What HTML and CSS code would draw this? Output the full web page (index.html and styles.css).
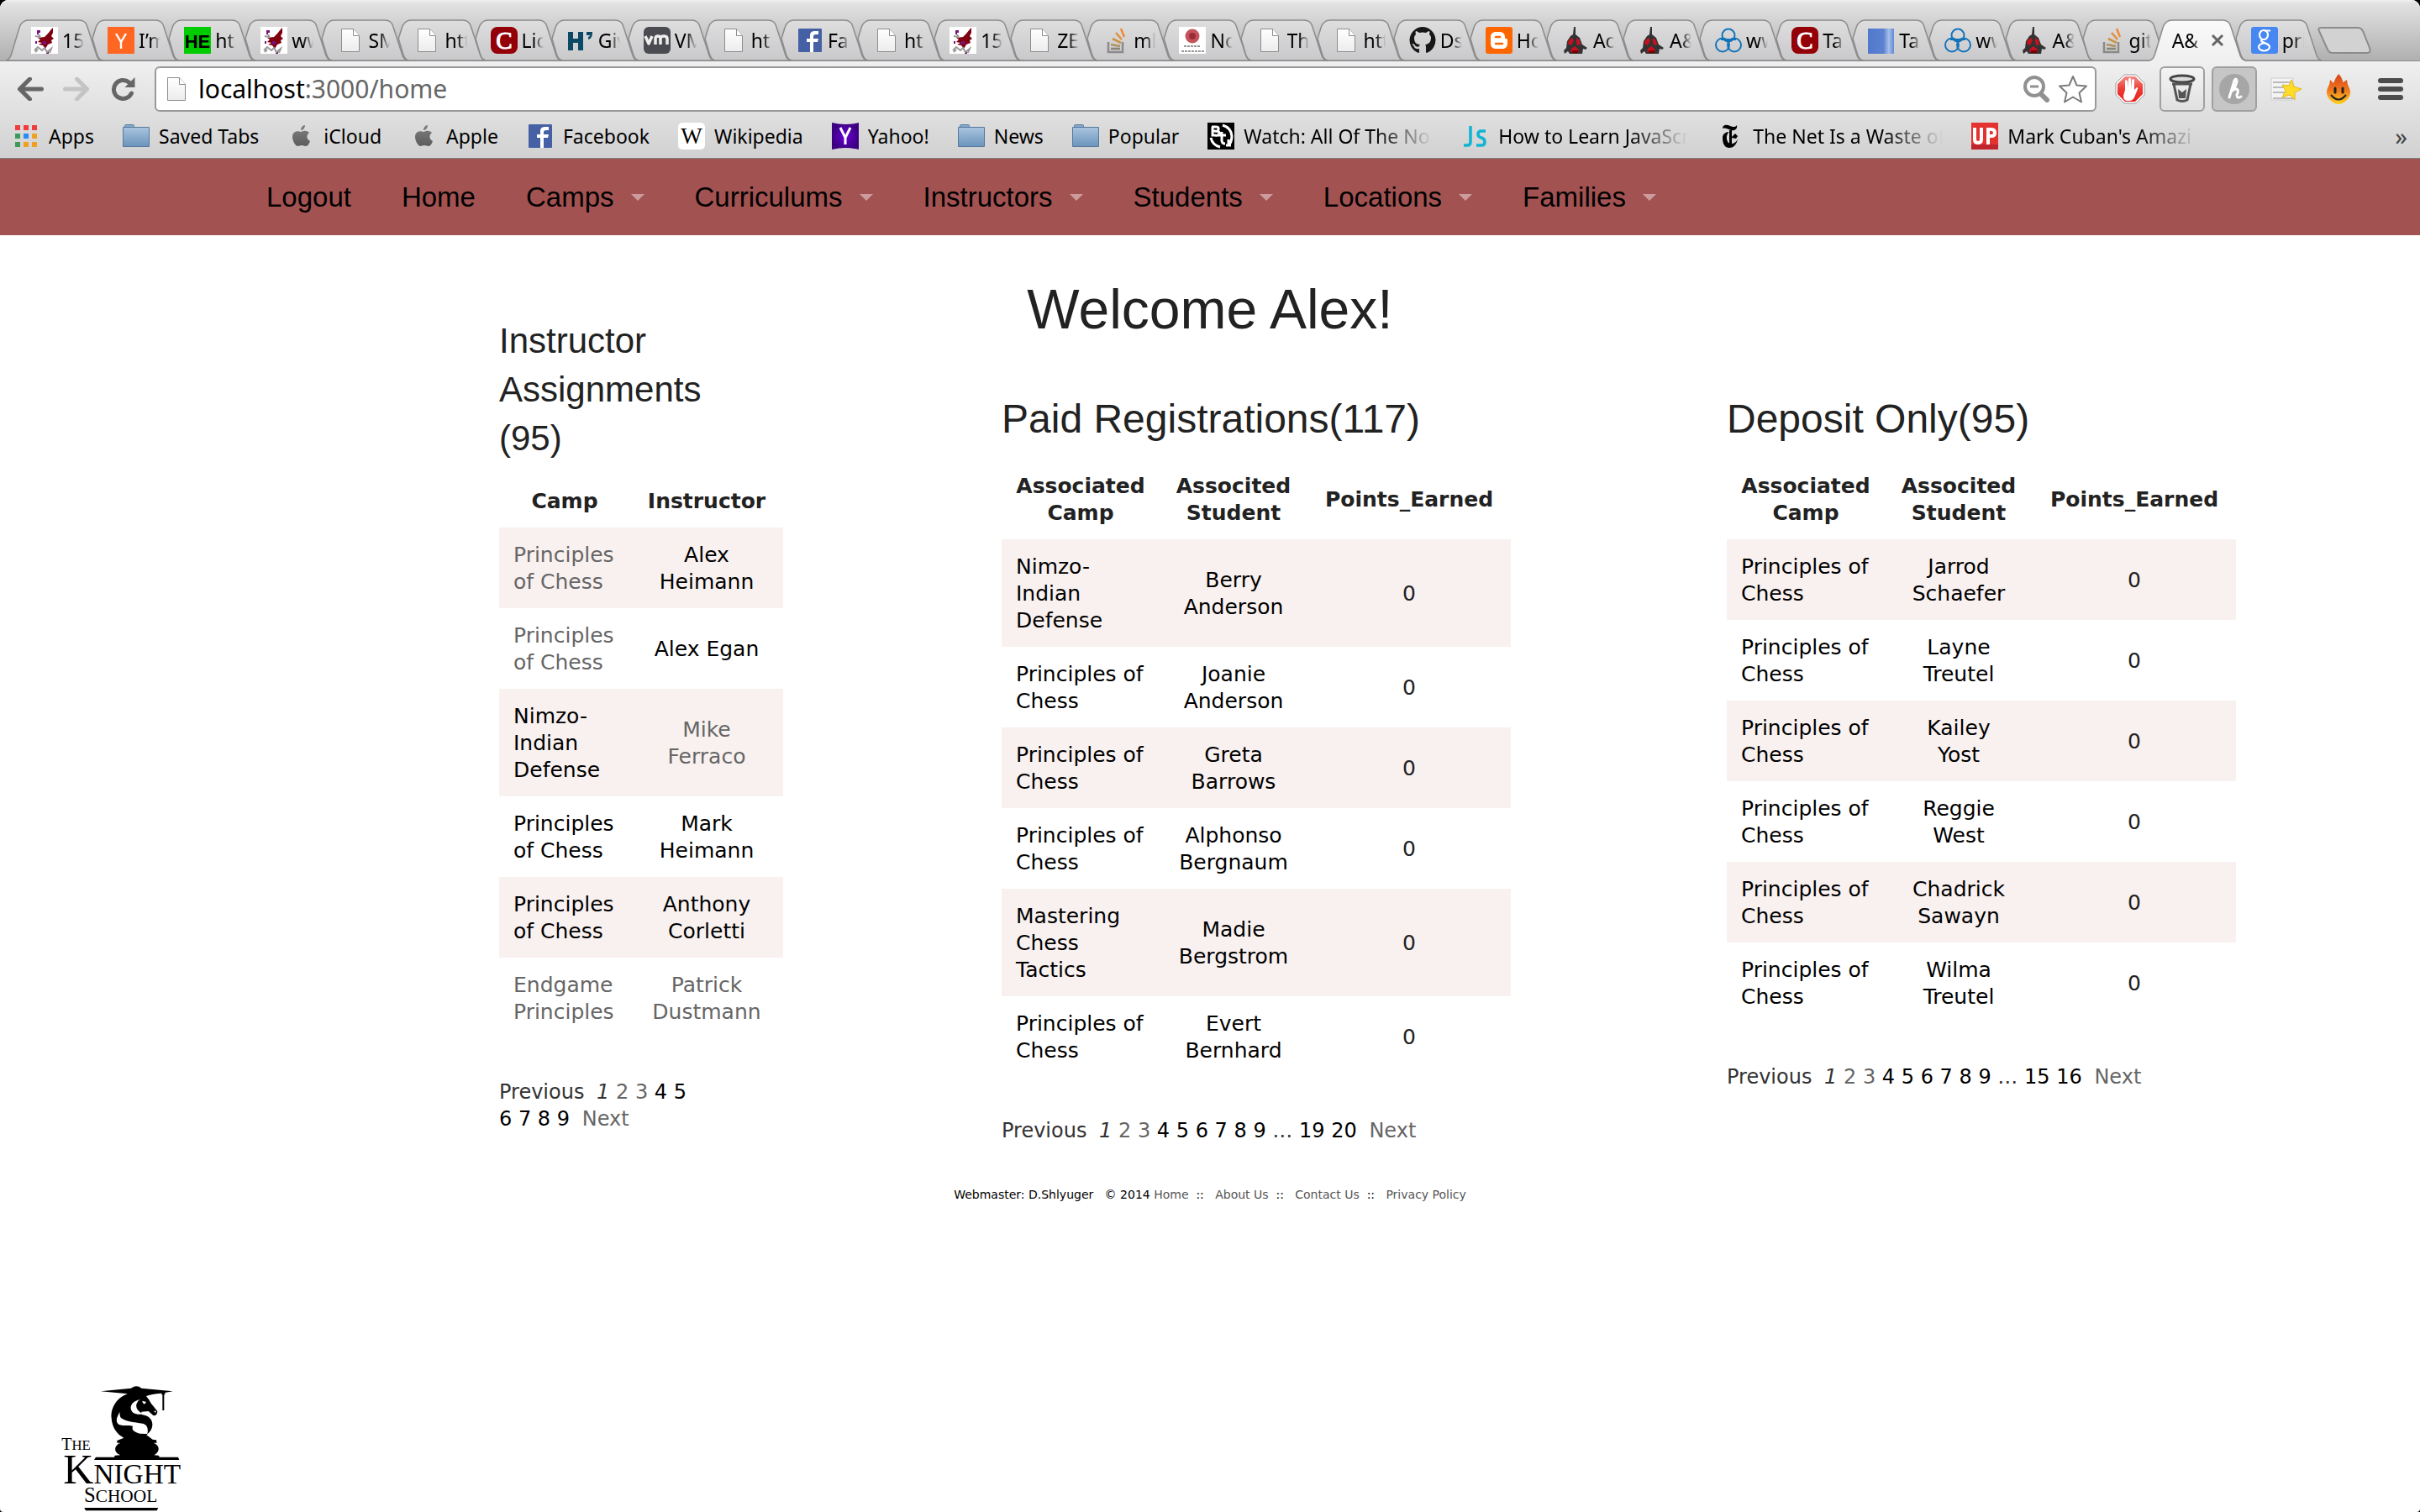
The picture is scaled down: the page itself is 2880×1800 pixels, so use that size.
FILE: index.html
```html
<!DOCTYPE html>
<html lang="en">
<head>
<meta charset="utf-8">
<title>A&amp;M Chess Camps</title>
<link rel="stylesheet" href="styles.css">
</head>
<body>
<svg class="defs" aria-hidden="true">
  <defs>
    <linearGradient id="g-folder" x1="0" y1="0" x2="0" y2="1"><stop offset="0" stop-color="#a9c4de"/><stop offset="1" stop-color="#6b94bb"/></linearGradient>
    <linearGradient id="g-page" x1="0" y1="0" x2="0" y2="1"><stop offset="0" stop-color="#fff"/><stop offset="1" stop-color="#ececec"/></linearGradient>
    <linearGradient id="g-apple" x1="0" y1="0" x2="0" y2="1"><stop offset="0" stop-color="#808080"/><stop offset="1" stop-color="#5c5c5c"/></linearGradient>
    <linearGradient id="g-blue" x1="0" y1="0" x2="1" y2="0"><stop offset="0" stop-color="#5078cc"/><stop offset=".6" stop-color="#5c82d0"/><stop offset=".8" stop-color="#a8c0ea"/><stop offset="1" stop-color="#6088d4"/></linearGradient>
    <radialGradient id="g-yahoo"><stop offset="0" stop-color="#6a00d8"/><stop offset="1" stop-color="#3c0080"/></radialGradient>
    <linearGradient id="g-flame" x1="0" y1="0" x2="0" y2="1"><stop offset="0" stop-color="#d8401c"/><stop offset=".55" stop-color="#f07a1c"/><stop offset="1" stop-color="#ffd21e"/></linearGradient>
    <linearGradient id="g-red" x1="0" y1="0" x2="0" y2="1"><stop offset="0" stop-color="#f58a86"/><stop offset=".5" stop-color="#ee3a34"/><stop offset="1" stop-color="#e8221c"/></linearGradient>
  </defs>
  <symbol id="i-page" viewBox="0 0 32 32"><path d="M5.500 2.500h14l7 8v19h-21z" fill="url(#g-page)" stroke="#8c8c8c"/><path d="M19.500 2.500v8h7" fill="#fff" stroke="#8c8c8c"/></symbol>
  <symbol id="i-dragon" viewBox="0 0 32 32"><path fill="#fff" d="M0 0h32v32H0z"/><path fill="#800010" d="M20 8l4-5 2-2v6l-2 4 3 3-3 2 1 3-5 2-3 5-3-4-5-1 4-2-5-1 3-3-3-2 8-1 3-3z"/><path fill="#7a1080" d="M7 4h4v3H9v2H7zM14 17h4v4h-4zM5 17h2v3H5zM18 29h3v3h-3z"/><path fill="none" stroke="#999" stroke-width="2" d="M4 28l4-4 5 4 3-3 3 5 5-4-2 5M5 30l3-3M10 12l-5-1M9 9l2 3"/></symbol>
  <symbol id="i-hn" viewBox="0 0 32 32"><path fill="#ff6622" d="M0 0h32v32H0z"/><path fill="none" stroke="#fff" stroke-width="2.400" d="M10 8l6 10 6-10M16 18v8"/></symbol>
  <symbol id="i-he" viewBox="0 0 32 32"><path fill="#0c0" d="M0 0h32v32H0z"/><text x="16" y="25" text-anchor="middle" class="t-sans t-bold" font-size="22">HE</text></symbol>
  <symbol id="i-c" viewBox="0 0 32 32"><rect width="32" height="32" rx="8" fill="#940008"/><text x="16" y="26" text-anchor="middle" class="t-serif" font-size="29" fill="#fff" stroke="#fff">C</text></symbol>
  <symbol id="i-h" viewBox="0 0 32 32"><path fill="#0a4a66" d="M1 6h6v8h6V6h6v22h-6v-9H7v9H1zM23 6h7c0 5-1 8-5 9v-3c2-1 2-1 2-2h-4z"/></symbol>
  <symbol id="i-vm" viewBox="0 0 32 32"><rect width="32" height="32" rx="6" fill="#4b4b52"/><path fill="none" stroke="#eee" stroke-width="3.500" stroke-linejoin="round" d="M2 11l4 9 4-9M14 21v-7q0-3 3-3t3 3v7M20 14q0-3 4-3t4 3v7"/></symbol>
  <symbol id="i-fb" viewBox="0 0 32 32"><rect x="2" y="2" width="28" height="28" rx="1" fill="#4560a4"/><path fill="#fff" d="M16 30V18h-4v-4h4v-4c0-4 3-5 6-5h4v4h-3c-2 0-3 1-3 2v3h6l-1 4h-5v12z"/></symbol>
  <symbol id="i-so" viewBox="0 0 32 32"><path fill="none" stroke="#8a8a8c" stroke-width="2.500" d="M7 18v12h17V18"/><g fill="none" stroke-width="2.600"><path stroke="#8a8478" d="M10 26h11"/><path stroke="#b09060" d="M10 21l11 2"/><path stroke="#cc9444" d="M12 14l10 5"/><path stroke="#e09040" d="M16 7l7 8"/><path stroke="#f08a3c" d="M22 2l4 10"/></g></symbol>
  <symbol id="i-seal" viewBox="0 0 32 32"><path fill="#fff" d="M0 0h32v32H0z"/><circle cx="16" cy="11" r="8.500" fill="#c4545c"/><circle cx="16" cy="11" r="4" fill="#9c2c38"/><path stroke="#999" stroke-width="2" stroke-dasharray="3 1" d="M6 23h20M3 29h27"/></symbol>
  <symbol id="i-gh" viewBox="0 0 32 32"><path fill="#181616" d="M16 0A16 16 0 0 0 11 31c1 0 1-1 1-2v-3c-5 1-6-2-6-2-1-2-2-3-2-3-1-1 0-1 0-1 2 0 3 2 3 2 1 2 4 2 5 1 0-1 1-2 1-2-4 0-7-2-7-8 0-2 1-3 2-4 0-1-1-2 0-4 0 0 1 0 4 2a15 15 0 0 1 8 0c3-2 4-2 4-2 1 2 0 3 0 4 1 1 2 2 2 4 0 6-4 8-7 8 1 1 1 2 1 4v4c0 1 0 2 1 2A16 16 0 0 0 16 0z"/></symbol>
  <symbol id="i-blog" viewBox="0 0 32 32"><rect width="32" height="32" rx="3" fill="#ff6600"/><path fill="#fff" d="M12 6h5c4 0 6 3 6 6 0 2 0 2 2 2l1 1v5c0 4-3 6-6 6h-8c-4 0-6-3-6-6v-8c0-3 2-6 6-6z"/><path stroke="#ff6600" stroke-width="2.600" stroke-linecap="round" d="M12 12h5M12 20h8"/></symbol>
  <symbol id="i-am" viewBox="0 0 32 32"><path fill="#333" d="M14 0h2v9l5 4 3 8 6 4-2 2-3-1-1 6H9l-2-3-4 3-1-4 3-3 1-8 4-6 3-2z"/><path fill="#c81020" d="M12 13l2 3-3 6-4-2 1-4zM17 13l4 3 1 5-4 1-1-5zM11 26l4-3 4 3 1 4H10z"/><path fill="#700" d="M12 28h7v3h-7z"/></symbol>
  <symbol id="i-tri" viewBox="0 0 32 32"><g fill="none" stroke="#1474ba" stroke-width="2"><circle cx="16" cy="10" r="7.500"/><circle cx="9" cy="21.500" r="8"/><circle cx="23" cy="21.500" r="8"/><path d="M10 14l6 4 6-4M16 18v7M7 15h18"/></g></symbol>
  <symbol id="i-blue" viewBox="0 0 32 32"><path fill="url(#g-blue)" d="M0 2h31v30H0z"/></symbol>
  <symbol id="i-google" viewBox="0 0 32 32"><rect width="32" height="32" rx="3" fill="#4787f2"/><g fill="none" stroke="#fff" stroke-width="2.200"><ellipse cx="15" cy="9.500" rx="5" ry="5.500"/><ellipse cx="15.500" cy="24" rx="6.500" ry="4.500"/><path d="M16 4.500h7M13 15c-2 2 0 3 3 4s5 2 5 4"/></g></symbol>
  <symbol id="i-apps" viewBox="0 0 32 32"><path fill="#f03c3c" d="M3 3h6v6H3zM13 3h6v6h-6zM23 3h6v6h-6z"/><path fill="#3a9c58" d="M3 13h6v6H3zM3 23h6v6H3z"/><path fill="#2a8cf0" d="M13 13h6v6h-6z"/><path fill="#f0a020" d="M23 13h6v6h-6zM13 23h6v6h-6zM23 23h6v6h-6z"/></symbol>
  <symbol id="i-folder" viewBox="0 0 32 32"><path fill="#88a8c8" stroke="#5a7ea4" d="M2.500 6V3.500q0-1 1-1h9q1 0 1 1V6"/><path fill="url(#g-folder)" stroke="#54789c" d="M.500 5.500h31v23H.500z"/></symbol>
  <symbol id="i-apple" viewBox="0 0 32 32"><path fill="url(#g-apple)" d="M21 3c0 3-2 6-5 6 0-3 2-6 5-6zM16 11c1 0 3-2 6-1 2 0 3 1 4 2-4 3-3 8 1 10-1 3-3 6-5 6s-3-1-5-1-3 1-5 1c-3-1-6-7-6-11 0-6 5-8 10-6z"/></symbol>
  <symbol id="i-wiki" viewBox="0 0 32 32"><rect width="32" height="32" rx="5" fill="#fff"/><text x="16" y="25" text-anchor="middle" class="t-serif" font-size="27">W</text></symbol>
  <symbol id="i-yahoo" viewBox="0 0 32 32"><path fill="url(#g-yahoo)" d="M0 0q16 4 32 0v32q-16-4-32 0z"/><path fill="none" stroke="#fff" stroke-width="3" d="M10 6l6 12 6-12M16 17v9"/></symbol>
  <symbol id="i-bt" viewBox="0 0 32 32"><path d="M0 0h32v32H0z"/><path fill="none" stroke="#fff" stroke-width="3" d="M5 5h5q4 0 3 3t-4 2H6M9 10q6 0 5 3t-5 2H6V5M4 18q2 9 11 11M18 3q10 3 11 13 0 6-3 10M17 11v10q0 4 4 4M13 15h9M25 20v7M28 27h-6"/></symbol>
  <symbol id="i-js" viewBox="0 0 32 32"><path fill="none" stroke="#10b4d4" stroke-width="3.500" d="M2 27h4q4 0 4-4V4M28 10h-5q-4 0-4 4 0 3 4 4t4 5q0 4-4 4h-6"/></symbol>
  <symbol id="i-nyt" viewBox="0 0 32 32"><path d="M7 7c0-5 5-5 9-3s7 1 8-1c1 5-3 7-7 6-5-2-7-3-10-2zM15 9h3v17h-3zM7 18c0-4 3-7 8-7-4 3-4 9-1 13 5 3 10-1 11-5-1 8-6 11-10 11-5 0-8-4-8-12zM18 17l4-4 3 3-2 3-5-1z"/></symbol>
  <symbol id="i-up" viewBox="0 0 32 32"><path fill="#e4322e" d="M0 0h32v27H0z"/><path fill="#c0242c" d="M0 26h32v6H0z"/><path fill="none" stroke="#fff" stroke-width="4" d="M4 6v14q0 4 4 4t4-4V6M20 26V8h4q4 0 4 4t-4 4h-3"/></symbol>
</svg>

<div class="window">
  <header class="browser">
    <div class="strip">
      <ul class="tabs">
        <li class="tab first"><button><svg><use href="#i-dragon"/></svg><span>15</span></button></li>
        <li class="tab"><button><svg><use href="#i-hn"/></svg><span>I’m</span></button></li>
        <li class="tab"><button><svg><use href="#i-he"/></svg><span>ht</span></button></li>
        <li class="tab"><button><svg><use href="#i-dragon"/></svg><span>ww</span></button></li>
        <li class="tab"><button><svg><use href="#i-page"/></svg><span>SM</span></button></li>
        <li class="tab"><button><svg><use href="#i-page"/></svg><span>htt</span></button></li>
        <li class="tab"><button><svg><use href="#i-c"/></svg><span>Lic</span></button></li>
        <li class="tab"><button><svg><use href="#i-h"/></svg><span>Giv</span></button></li>
        <li class="tab"><button><svg><use href="#i-vm"/></svg><span>VM</span></button></li>
        <li class="tab"><button><svg><use href="#i-page"/></svg><span>ht</span></button></li>
        <li class="tab"><button><svg><use href="#i-fb"/></svg><span>Fa</span></button></li>
        <li class="tab"><button><svg><use href="#i-page"/></svg><span>ht</span></button></li>
        <li class="tab"><button><svg><use href="#i-dragon"/></svg><span>15</span></button></li>
        <li class="tab"><button><svg><use href="#i-page"/></svg><span>ZE</span></button></li>
        <li class="tab"><button><svg><use href="#i-so"/></svg><span>ml</span></button></li>
        <li class="tab"><button><svg><use href="#i-seal"/></svg><span>No</span></button></li>
        <li class="tab"><button><svg><use href="#i-page"/></svg><span>Th</span></button></li>
        <li class="tab"><button><svg><use href="#i-page"/></svg><span>htt</span></button></li>
        <li class="tab"><button><svg><use href="#i-gh"/></svg><span>Ds</span></button></li>
        <li class="tab"><button><svg><use href="#i-blog"/></svg><span>Ho</span></button></li>
        <li class="tab"><button><svg><use href="#i-am"/></svg><span>Ac</span></button></li>
        <li class="tab"><button><svg><use href="#i-am"/></svg><span>A&amp;</span></button></li>
        <li class="tab"><button><svg><use href="#i-tri"/></svg><span>ww</span></button></li>
        <li class="tab"><button><svg><use href="#i-c"/></svg><span>Ta</span></button></li>
        <li class="tab"><button><svg><use href="#i-blue"/></svg><span>Ta</span></button></li>
        <li class="tab"><button><svg><use href="#i-tri"/></svg><span>ww</span></button></li>
        <li class="tab"><button><svg><use href="#i-am"/></svg><span>A&amp;</span></button></li>
        <li class="tab"><button><svg><use href="#i-so"/></svg><span>git</span></button></li>
        <li class="tab active"><button><span>A&amp;</span><svg class="close" viewBox="0 0 16 16"><path d="M2 2l12 12M14 2L2 14" stroke="#666" stroke-width="3"/></svg></button></li>
        <li class="tab"><button><svg><use href="#i-google"/></svg><span>pri</span></button></li>
      </ul>
      <button class="new-tab" aria-label="New tab"><svg viewBox="0 0 64 32" preserveAspectRatio="none"><path d="M4 1h44q4 0 6 4l8 20q2 6-3 6H18q-4 0-6-4L2 5q-2-4 2-4z" fill="#d2d2d3" stroke="#8c8c8c" stroke-width="2"/></svg></button>
    </div>
    <div class="toolbar">
      <div class="arrows">
        <button aria-label="Back"><svg viewBox="0 0 32 28"><path d="M16 2L4 14l12 12M4 14h26" fill="none" stroke="#666" stroke-width="5" stroke-linecap="round" stroke-linejoin="round"/></svg></button>
        <button aria-label="Forward"><svg viewBox="0 0 32 28"><path d="M16 2l12 12-12 12M28 14H2" fill="none" stroke="#c4c4c4" stroke-width="5" stroke-linecap="round" stroke-linejoin="round"/></svg></button>
        <button aria-label="Reload"><svg viewBox="0 0 32 28"><path d="M25 19a11 11 0 1 1-3-13" fill="none" stroke="#666" stroke-width="5" stroke-linecap="round"/><path d="M29 0v12H17z" fill="#666"/></svg></button>
      </div>
      <div class="omnibox">
        <svg class="page"><use href="#i-page"/></svg>
        <span class="url"><b>localhost</b>:3000/home</span>
        <svg class="lens" viewBox="0 0 32 32"><circle cx="14" cy="13" r="11" fill="#fff" stroke="#919191" stroke-width="4"/><path d="M9 13h10" stroke="#919191" stroke-width="3"/><path d="M22 22l7 7" stroke="#919191" stroke-width="6" stroke-linecap="round"/></svg>
        <svg class="star" viewBox="0 0 36 34"><path d="M18 2l4.500 10.500 11.500 1-8.500 8 2.500 11L18 26.500 8 32.500l2.500-11-8.500-8 11.500-1z" fill="#fff" stroke="#7c7c7c" stroke-width="2" stroke-linejoin="round"/></svg>
      </div>
      <div class="extensions">
        <button aria-label="Blocker"><svg viewBox="0 0 36 36"><path d="M11 1h14l10 10v14L25 35H11L1 25V11z" fill="#fff" stroke="#999"/><path d="M12 3h12l9 9v12l-9 9H12l-9-9V12z" fill="url(#g-red)"/><path d="M12 19V9q0-2 1-2t2 2v8l1-11q2-3 3 0v11l1-10q2-2 3 0v12l3-3q2 0 1 2l-4 10q-2 4-6 4h-2q-5 0-5-6z" fill="#fff"/></svg></button>
        <button class="boxed" aria-label="Trash"><svg viewBox="0 0 36 36"><ellipse cx="18" cy="6" rx="14" ry="4" fill="#ddd" stroke="#444" stroke-width="3"/><path d="M6 12h24M8 12l4 19q6 3 12 0l4-19" fill="none" stroke="#555" stroke-width="3"/><path d="M13 18l5 4 5-4-1 11h-8z" fill="#555"/></svg></button>
        <button class="boxed pressed" aria-label="Honey"><svg viewBox="0 0 36 36"><circle cx="18" cy="18" r="18" fill="#a6a6a6"/><path d="M12 28L18 8q2-4 3 0 0 6-7 13 6-5 8-2 1 2-1 6 0 5 5 2" fill="none" stroke="#fff" stroke-width="3" stroke-linecap="round"/></svg></button>
        <button aria-label="Favourites"><svg viewBox="0 0 38 36"><path d="M1 5h26v26H1z" fill="#f4f4f4" stroke="#ccc"/><path d="M3 10h20M3 16h16M3 22h14M3 29h24" stroke="#bbb" stroke-width="2"/><path d="M25 7l3 8 9 3-8 4v9l-6-6-9 3 4-8-4-7 8 1z" fill="#fedc28" stroke="#e0b820"/></svg></button>
        <button aria-label="Flame"><svg viewBox="0 0 36 36"><path d="M18 0q5 5 5 10 4-2 5-3 0 5 3 10 3 8-3 14-5 5-10 5t-10-5q-6-7-3-14 3-5 3-10l4 4q2-6 6-11z" fill="url(#g-flame)"/><path d="M14 17v5M23 17v5" stroke="#222" stroke-width="3" stroke-linecap="round"/><path d="M9 25q9 11 18 0" fill="none" stroke="#222" stroke-width="2"/></svg></button>
        <button aria-label="Menu"><svg viewBox="0 0 38 36"><path d="M7 8h24M7 18h24M7 28h24" stroke="#4c4c4c" stroke-width="6" stroke-linecap="round"/></svg></button>
      </div>
    </div>
    <nav class="bookmarks" aria-label="Bookmarks">
      <a href="#"><svg><use href="#i-apps"/></svg><span>Apps</span></a>
      <a href="#"><svg><use href="#i-folder"/></svg><span>Saved Tabs</span></a>
      <a href="#"><svg><use href="#i-apple"/></svg><span>iCloud</span></a>
      <a href="#"><svg><use href="#i-apple"/></svg><span>Apple</span></a>
      <a href="#"><svg><use href="#i-fb"/></svg><span>Facebook</span></a>
      <a href="#"><svg><use href="#i-wiki"/></svg><span>Wikipedia</span></a>
      <a href="#"><svg><use href="#i-yahoo"/></svg><span>Yahoo!</span></a>
      <a href="#"><svg><use href="#i-folder"/></svg><span>News</span></a>
      <a href="#"><svg><use href="#i-folder"/></svg><span>Popular</span></a>
      <a href="#" class="long"><svg><use href="#i-bt"/></svg><span>Watch: All Of The No</span></a>
      <a href="#" class="long"><svg><use href="#i-js"/></svg><span>How to Learn JavaScr</span></a>
      <a href="#" class="long"><svg><use href="#i-nyt"/></svg><span>The Net Is a Waste of</span></a>
      <a href="#" class="long"><svg><use href="#i-up"/></svg><span>Mark Cuban's Amazi</span></a>
      <button class="more">»</button>
    </nav>
  </header>

  <nav class="site-nav" aria-label="Main">
    <a href="#">Logout</a>
    <a href="#">Home</a>
    <a href="#" class="drop">Camps</a>
    <a href="#" class="drop">Curriculums</a>
    <a href="#" class="drop">Instructors</a>
    <a href="#" class="drop">Students</a>
    <a href="#" class="drop">Locations</a>
    <a href="#" class="drop">Families</a>
  </nav>

  <main>
    <h1>Welcome Alex!</h1>
    <section class="instructors">
      <h3>Instructor Assignments (95)</h3>
      <table>
        <thead><tr><th>Camp</th><th>Instructor</th></tr></thead>
        <tbody>
          <tr><td><a href="#" class="seen">Principles of Chess</a></td><td><a href="#">Alex Heimann</a></td></tr>
          <tr><td><a href="#" class="seen">Principles of Chess</a></td><td><a href="#">Alex Egan</a></td></tr>
          <tr><td><a href="#">Nimzo-Indian Defense</a></td><td><a href="#" class="seen">Mike Ferraco</a></td></tr>
          <tr><td><a href="#">Principles of Chess</a></td><td><a href="#">Mark Heimann</a></td></tr>
          <tr><td><a href="#">Principles of Chess</a></td><td><a href="#">Anthony Corletti</a></td></tr>
          <tr><td><a href="#" class="seen">Endgame Principles</a></td><td><a href="#" class="seen">Patrick Dustmann</a></td></tr>
        </tbody>
      </table>
      <p class="pages"><span class="prev">Previous</span> <em>1</em> <a href="#" class="seen">2</a> <a href="#" class="seen">3</a> <a href="#">4</a> <a href="#">5</a> <a href="#">6</a> <a href="#">7</a> <a href="#">8</a> <a href="#">9</a> <a href="#" class="next seen">Next</a></p>
    </section>
    <section class="paid">
      <h2>Paid Registrations(117)</h2>
      <table class="wide">
        <thead><tr><th>Associated Camp</th><th>Associted Student</th><th>Points_Earned</th></tr></thead>
        <tbody>
          <tr><td><a href="#">Nimzo-Indian Defense</a></td><td><a href="#">Berry Anderson</a></td><td>0</td></tr>
          <tr><td><a href="#">Principles of Chess</a></td><td><a href="#">Joanie Anderson</a></td><td>0</td></tr>
          <tr><td><a href="#">Principles of Chess</a></td><td><a href="#">Greta Barrows</a></td><td>0</td></tr>
          <tr><td><a href="#">Principles of Chess</a></td><td><a href="#">Alphonso Bergnaum</a></td><td>0</td></tr>
          <tr><td><a href="#">Mastering Chess Tactics</a></td><td><a href="#">Madie Bergstrom</a></td><td>0</td></tr>
          <tr><td><a href="#">Principles of Chess</a></td><td><a href="#">Evert Bernhard</a></td><td>0</td></tr>
        </tbody>
      </table>
      <p class="pages"><span class="prev">Previous</span> <em>1</em> <a href="#" class="seen">2</a> <a href="#" class="seen">3</a> <a href="#">4</a> <a href="#">5</a> <a href="#">6</a> <a href="#">7</a> <a href="#">8</a> <a href="#">9</a> … <a href="#">19</a> <a href="#">20</a> <a href="#" class="next seen">Next</a></p>
    </section>
    <section class="deposit">
      <h2>Deposit Only(95)</h2>
      <table class="wide">
        <thead><tr><th>Associated Camp</th><th>Associted Student</th><th>Points_Earned</th></tr></thead>
        <tbody>
          <tr><td><a href="#">Principles of Chess</a></td><td><a href="#">Jarrod Schaefer</a></td><td>0</td></tr>
          <tr><td><a href="#">Principles of Chess</a></td><td><a href="#">Layne Treutel</a></td><td>0</td></tr>
          <tr><td><a href="#">Principles of Chess</a></td><td><a href="#">Kailey<br>Yost</a></td><td>0</td></tr>
          <tr><td><a href="#">Principles of Chess</a></td><td><a href="#">Reggie West</a></td><td>0</td></tr>
          <tr><td><a href="#">Principles of Chess</a></td><td><a href="#">Chadrick Sawayn</a></td><td>0</td></tr>
          <tr><td><a href="#">Principles of Chess</a></td><td><a href="#">Wilma Treutel</a></td><td>0</td></tr>
        </tbody>
      </table>
      <p class="pages"><span class="prev">Previous</span> <em>1</em> <a href="#" class="seen">2</a> <a href="#" class="seen">3</a> <a href="#">4</a> <a href="#">5</a> <a href="#">6</a> <a href="#">7</a> <a href="#">8</a> <a href="#">9</a> … <a href="#">15</a> <a href="#">16</a> <a href="#" class="next seen">Next</a></p>
    </section>
  </main>

  <footer>Webmaster: D.Shlyuger &nbsp; © 2014 <a href="#">Home</a>&nbsp; :: &nbsp; <a href="#">About Us</a>&nbsp; :: &nbsp; <a href="#">Contact Us</a>&nbsp; :: &nbsp; <a href="#">Privacy Policy</a></footer>

  <svg class="logo" viewBox="216 150 432 450" role="img" aria-label="The Knight School">
    <path d="M360 169L468 158Q488 144 505 158L617 169L575 176Q540 178 522 186H452L455 178z"/>
    <path d="M580 174h6v63h-6zM577 172h12v9h-12z"/>
    <path d="M455 178C410 195 395 235 398 265C400 300 420 325 442 335L418 345V353H430C405 362 405 388 430 397L410 398L408 404H342L336 414H640L636 404H570L566 398L550 397C572 385 572 362 548 353H560L558 343L545 341L523 325C540 312 547 295 543 280C540 265 528 255 505 252V242L530 240L548 256Q562 256 562 240L540 213Q530 195 522 186Q505 176 500 176z"/>
    <path fill="#fff" d="M500 198C478 203 466 215 467 230C469 246 485 254 512 250C495 242 484 230 487 215Q490 203 500 198zM428 243C415 262 412 280 425 288C440 294 470 288 474 294C468 310 485 316 500 320L526 321C530 305 527 288 510 284C480 281 440 275 430 262Q426 252 428 243zM508 203l14 4-6 8q-8-3-8-12zM551 239q6-2 6 3t-6 1z"/>
    <text x="220" y="378" class="t-serif" font-size="60">T<tspan font-size="50">HE</tspan></text>
    <text x="226" y="497" class="t-serif" font-size="150">K<tspan font-size="100">NIGHT</tspan></text>
    <text x="300" y="564" class="t-serif" font-size="74">S<tspan font-size="64">CHOOL</tspan></text>
    <path d="M301 585H565L560 595H306z"/>
  </svg>
</div>
</body>
</html>
```
FILE: styles.css
```css
* { box-sizing: border-box; }

html { background: #000; }

body {
  margin: 0;
  color: #222;
  font: 25px/32px "DejaVu Sans", Verdana, sans-serif;
}

a { color: #000; text-decoration: none; }

button {
  margin: 0;
  padding: 0;
  border: 0;
  background: none;
  color: inherit;
  font: inherit;
}

.defs { position: absolute; width: 0; height: 0; }
.t-sans { font-family: "Liberation Sans", Arial, sans-serif; }
.t-serif { font-family: "Liberation Serif", "Times New Roman", serif; }
.t-bold { font-weight: bold; }

.window {
  display: flex;
  flex-direction: column;
  min-height: 100vh;
  overflow: hidden;
  border-radius: 10px 10px 4px 4px;
  background: #fff;
}

/* Browser chrome */
.browser {
  color: #000;
  font: 23px/32px "Noto Sans", "Lucida Grande", sans-serif;
  border-bottom: 1px solid #7d7d7d;
  background: linear-gradient(#f0f0f0 72px, #d1d1d1);
}

.strip {
  display: flex;
  align-items: flex-end;
  height: 73px;
  padding: 0 58px 0 6px;
  background: linear-gradient(#8c8c8c, #8c8c8c) bottom / 100% 1px no-repeat,
    linear-gradient(#f0f0f0, #e2e2e2 4px, #b0b0b0 72px);
}

.tabs {
  display: flex;
  flex: 1;
  min-width: 0;
  margin: 0;
  padding: 0 25px 0 0;
  list-style: none;
}

.tab {
  flex: 1 1 0;
  min-width: 0;
  height: 50px;
  margin-right: -25px;
  background: url("data:image/svg+xml,%3Csvg xmlns='http://www.w3.org/2000/svg' viewBox='0 0 116 50' preserveAspectRatio='none'%3E%3ClinearGradient id='g' x2='0' y2='1'%3E%3Cstop stop-color='%23dededf'/%3E%3Cstop offset='1' stop-color='%23c9c9cb'/%3E%3C/linearGradient%3E%3Cpath d='M25 49Q20 48 18 40L13 23L17 10Q20 1 28 1H88Q96 1 98 9L108 40Q110 48 115 49Z' fill='url(%23g)' stroke='%238c8c8c' stroke-width='1.500'/%3E%3C/svg%3E") 0 0 / 100% 100% no-repeat;
}

.tab.first {
  background-image: url("data:image/svg+xml,%3Csvg xmlns='http://www.w3.org/2000/svg' viewBox='0 0 116 50' preserveAspectRatio='none'%3E%3ClinearGradient id='g' x2='0' y2='1'%3E%3Cstop stop-color='%23dededf'/%3E%3Cstop offset='1' stop-color='%23c9c9cb'/%3E%3C/linearGradient%3E%3Cpath d='M1 49Q6 48 8 40L17 10Q20 1 28 1H88Q96 1 98 9L108 40Q110 48 115 49Z' fill='url(%23g)' stroke='%238c8c8c' stroke-width='1.500'/%3E%3C/svg%3E");
}

.tab.active {
  position: relative;
  z-index: 1;
  background-image: url("data:image/svg+xml,%3Csvg xmlns='http://www.w3.org/2000/svg' viewBox='0 0 116 50' preserveAspectRatio='none'%3E%3ClinearGradient id='g' x2='0' y2='1'%3E%3Cstop stop-color='%23fafafa'/%3E%3Cstop offset='1' stop-color='%23efefef'/%3E%3C/linearGradient%3E%3Cpath d='M1 49Q6 48 8 40L17 10Q20 1 28 1H88Q96 1 98 9L108 40Q110 48 115 49V50H1Z' fill='url(%23g)'/%3E%3Cpath d='M1 49Q6 48 8 40L17 10Q20 1 28 1H88Q96 1 98 9L108 40Q110 48 115 49' fill='none' stroke='%238c8c8c' stroke-width='1.500'/%3E%3C/svg%3E");
}

.tab button {
  display: flex;
  align-items: center;
  gap: 5px;
  width: 100%;
  height: 100%;
  padding: 0 22px 0 31px;
}

.tab svg { flex: none; width: 32px; height: 32px; }
.tab .close { width: 16px; height: 16px; }

.tab span {
  flex: 1;
  min-width: 0;
  overflow: hidden;
  white-space: nowrap;
  text-align: left;
  -webkit-mask-image: linear-gradient(to left, transparent, #000 12px);
  mask-image: linear-gradient(to left, transparent, #000 12px);
}

.tab.active button { padding: 0 26px 0 28px; gap: 10px; }

.new-tab { width: 64px; height: 32px; margin: 0 0 9px -6px; }
.new-tab svg { display: block; width: 100%; height: 100%; }

.toolbar { display: flex; align-items: center; height: 66px; padding: 0 8px 0 19px; }

.arrows { display: flex; gap: 23px; margin-right: 20px; }
.arrows svg { display: block; width: 33px; height: 28px; }

.omnibox {
  display: flex;
  flex: 1;
  align-items: center;
  height: 54px;
  padding: 0 8px;
  border: 2px solid #999;
  border-radius: 6px;
  background: #fff;
}

.page { width: 32px; height: 32px; margin-right: 10px; }
.url { flex: 1; color: #666; font-size: 30px; }
.url b { color: #000; font-weight: normal; }
.lens { width: 32px; height: 32px; margin-right: 10px; }
.star { width: 36px; height: 34px; }

.extensions { display: flex; align-items: center; gap: 8px; padding-left: 13px; }
.extensions button { display: grid; place-items: center; width: 54px; height: 54px; }
.extensions svg { width: 38px; height: 36px; }
.extensions .boxed { border: 2px solid #a0a0a0; border-radius: 6px; background: linear-gradient(#f4f4f4, #e0e0e0); }
.extensions .pressed { background: #c6c6c6; }

.bookmarks { display: flex; align-items: center; gap: 34px; height: 49px; padding: 0 15px 4px; }
.bookmarks a { display: flex; align-items: center; gap: 11px; white-space: nowrap; }
.bookmarks svg { flex: none; width: 32px; height: 32px; }

.bookmarks .long span {
  width: 226px;
  overflow: hidden;
  -webkit-mask-image: linear-gradient(to left, transparent, #000 70px);
  mask-image: linear-gradient(to left, transparent, #000 70px);
}

.more { margin-left: auto; color: #444; font-size: 29px; }

/* Site navigation */
.site-nav {
  display: flex;
  align-items: center;
  height: 91px;
  padding: 0 287px;
  background: #a35252;
  font: 33px/48px "Liberation Sans", Helvetica, sans-serif;
}

.site-nav a { display: flex; align-items: center; padding: 0 30px; }

.drop::after {
  content: "";
  margin-left: 20px;
  border: 8px solid transparent;
  border-top-color: #cc9c9c;
  border-bottom: 0;
}

/* Dashboard */
main {
  display: grid;
  grid-template-columns: minmax(0, 594fr) minmax(0, 598fr) minmax(0, 863fr) minmax(0, 825fr);
  align-items: start;
}

h1, h2, h3 { margin: 0; font-family: "Liberation Sans", Helvetica, sans-serif; font-weight: normal; }
h1 { grid-area: 1 / 1 / 2 / -1; padding-top: 42px; font-size: 66px; line-height: 92px; text-align: center; }
h2 { font-size: 48px; line-height: 68px; }
h3 { width: 40%; font-size: 42px; line-height: 58px; }

.instructors { grid-area: 1 / 2 / 3 / 3; padding-top: 97px; }
.paid { grid-area: 2 / 3; padding-top: 51px; }
.deposit { grid-area: 2 / 4; padding-top: 51px; }

table { width: 338px; margin: 13px 0 48px; border-collapse: collapse; table-layout: fixed; }
table.wide { width: 606px; }
th, td { padding: 17px 17px 15px; text-align: center; }
td { padding: 17px 20px 15px; }
td:first-child { padding: 17px 17px 15px; text-align: left; }
th:first-child { width: 156px; }
.wide th:first-child { width: 188px; }
.wide th:nth-child(2) { width: 176px; }
tbody tr:nth-child(odd) { background: #f9f1f0; }
.seen { color: #666; }

.pages { margin: 0; color: #333; font-size: 24px; }
.instructors .pages { width: 40%; }
.prev { margin-right: 7px; }
.next { margin-left: 7px; }

footer { margin-top: 50px; color: #000; font-size: 14px; line-height: 20px; text-align: center; }
footer a { color: #555; }

.logo { width: 144px; height: 150px; margin: auto 0 0 72px; }
```
